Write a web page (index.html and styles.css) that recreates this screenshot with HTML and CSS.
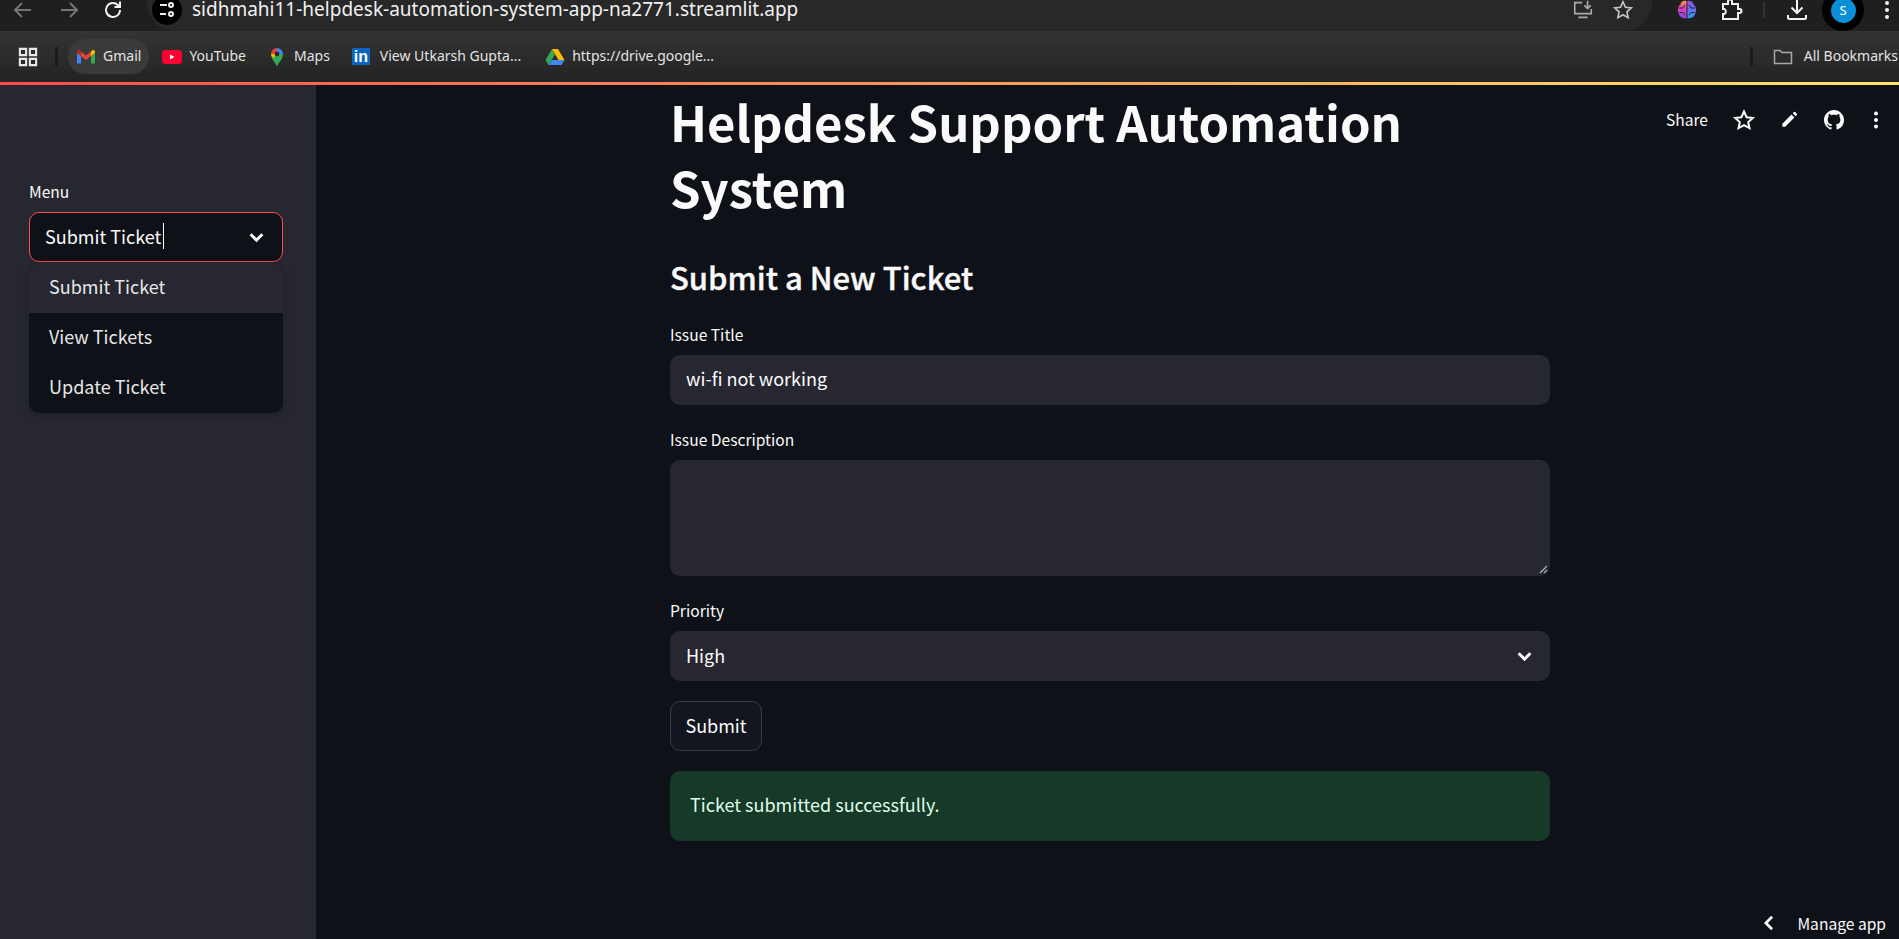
FILE: index.html
```html
<!DOCTYPE html>
<html lang="en">

<head>
    <meta charset="UTF-8">
    <title>Helpdesk Support Automation System</title>
    <link rel="stylesheet" href="styles.css">
</head>

<body>
    <div class="toolbar">
        <div class="nav-icons">
            <svg class="nav-icon dim" viewBox="0 0 24 24"><path d="M20 12H5M11 5l-7 7 7 7"/></svg>
            <svg class="nav-icon dim" viewBox="0 0 24 24"><path d="M4 12h15M13 5l7 7-7 7"/></svg>
            <svg class="nav-icon reload" viewBox="0 0 24 24"><path d="M19 12a7 7 0 1 1-2.200-5.100L19 9M19 3.500V9h-5.500"/></svg>
        </div>
        <div class="url-pill">
            <span class="site-badge">
                <svg viewBox="0 0 20 20"><path d="M3 5h7M3 14h6"/><circle cx="14" cy="5" r="2"/><circle cx="14" cy="14" r="2"/></svg>
            </span>
            <span class="url-text">sidhmahi11-helpdesk-automation-system-app-na2771.streamlit.app</span>
            <svg class="pill-icon install" viewBox="0 0 24 24"><path d="M11 4H3v12h18v-5M7 20h10M17 2v8M13.500 7l3.500 3.500L20.500 7"/></svg>
            <svg class="pill-icon star" viewBox="0 0 24 24"><path d="M12 3l2.700 6 6.300.7-4.700 4.300 1.300 6.400L12 17.200l-5.600 3.200L7.700 14 3 9.700 9.300 9z"/></svg>
        </div>
        <div class="toolbar-right">
            <svg class="brain" viewBox="0 0 20 20">
                <defs>
                    <linearGradient id="brainLeft" x1="0" y1="0" x2="0" y2="1">
                        <stop offset="0" stop-color="#f79a3e"/>
                        <stop offset="0.4" stop-color="#e83fb0"/>
                        <stop offset="1" stop-color="#8f45e8"/>
                    </linearGradient>
                    <linearGradient id="brainRight" x1="0" y1="0" x2="0" y2="1">
                        <stop offset="0" stop-color="#9a4be8"/>
                        <stop offset="1" stop-color="#2f9bf0"/>
                    </linearGradient>
                </defs>
                <path d="M9.500 1C6.500.2 3.500 2 3.500 4.500 1 6 .2 10 1.500 12.500c.3 3 3 6 8 6z" fill="url(#brainLeft)"/>
                <path d="M10.500 1c3-.8 6 1 6 3.500 2.500 1.500 3.300 5.500 2 8-.3 3-3 6-8 6z" fill="url(#brainRight)"/>
                <path d="M2 8h4l2-3M2.500 12.500H6l2 2.500M18 8h-4l-2-3M17.500 12.500H14L12 15" fill="none" stroke="#2a2140" stroke-width="1"/>
            </svg>
            <svg class="tool-icon puzzle" viewBox="0 0 24 24"><path d="M4 6h5V3.500a2 2 0 0 1 4 0V6h6v5h1.500a2 2 0 0 1 0 4H19v6H4v-5h1.500a3 3 0 0 0 0-5H4z"/></svg>
            <span class="tool-sep"></span>
            <svg class="tool-icon download" viewBox="0 0 24 24"><path d="M12 2v13M6.500 9.500L12 15l5.500-5.500M3 17v2.500a1.500 1.500 0 0 0 1.500 1.500h15a1.500 1.500 0 0 0 1.500-1.500V17"/></svg>
            <span class="avatar-ring"><span class="avatar">S</span></span>
            <svg class="tool-dots" viewBox="0 0 6 20"><circle cx="3" cy="3" r="2"/><circle cx="3" cy="10" r="2"/><circle cx="3" cy="17" r="2"/></svg>
        </div>
    </div>

    <div class="bookmarks">
        <svg class="apps" viewBox="0 0 16 16"><path d="M1.500 1.500h5v5h-5zM9.500 1.500h5v5h-5zM1.500 9.500h5v5h-5zM9.500 9.500h5v5h-5z"/></svg>
        <span class="bm-sep"></span>
        <div class="bm active">
            <svg class="bm-icon" viewBox="0 0 20 16">
                <path d="M1 14.500V4l4 3v7.500z" fill="#4285f4"/>
                <path d="M15 14.500V7l4-3v10.500z" fill="#34a853"/>
                <path d="M15 2.500V7l4-3V3c0-1.700-2-2.500-3-1.500z" fill="#fbbc04"/>
                <path d="M5 7V2.500L10 6.500l5-4V7l-5 4z" fill="#ea4335"/>
                <path d="M1 4V3c0-1.700 2-2.500 3-1.500L5 2.500V7z" fill="#c5221f"/>
            </svg>
            <span class="bm-label">Gmail</span>
        </div>
        <div class="bm">
            <svg class="bm-icon" viewBox="0 0 20 16"><rect x="0" y="1" width="20" height="14" rx="3.500" fill="#ff0033"/><path d="M8 5.500l4.500 2.500L8 10.500z" fill="#fff"/></svg>
            <span class="bm-label">YouTube</span>
        </div>
        <div class="bm">
            <svg class="bm-icon" viewBox="0 0 14 20">
                <path d="M7 19.500C5 15 1 12 1 7h12c0 5-4 8-6 12.500z" fill="#34a853"/>
                <path d="M1 7a6 6 0 0 1 6-6v6z" fill="#ea4335"/>
                <path d="M7 1a6 6 0 0 1 6 6H7z" fill="#4285f4"/>
                <path d="M1 7h6l-3.500 4C2 9.700 1 8.500 1 7z" fill="#fbbc04"/>
                <circle cx="7" cy="7" r="2.400" fill="#2b2b2b"/>
            </svg>
            <span class="bm-label">Maps</span>
        </div>
        <div class="bm linked">
            <span class="linkedin">in</span>
            <span class="bm-label">View Utkarsh Gupta...</span>
        </div>
        <div class="bm">
            <svg class="bm-icon" viewBox="0 0 20 18">
                <path d="M7 1l3 5.500L3.500 17l-3-5z" fill="#34a853"/>
                <path d="M7 1h6l6.500 11H13.500z" fill="#fbbc04"/>
                <path d="M7 12h12.500l-3 5h-13z" fill="#4285f4"/>
            </svg>
            <span class="bm-label">https://drive.google...</span>
        </div>
        <div class="bm-right">
            <span class="bm-sep"></span>
            <svg class="folder" viewBox="0 0 20 16"><path d="M1.500 14.500v-13h5.500l2 2h9.500v11z"/></svg>
            <span class="bm-label">All Bookmarks</span>
        </div>
    </div>

    <div class="deco-line"></div>

    <div class="app">
        <aside class="sidebar">
            <label class="field-label">Menu</label>
            <div class="side-select">
                <div class="select-box focused">
                    <span class="caret-text">Submit Ticket</span>
                    <svg class="chevron" viewBox="0 0 16 16"><path d="M3.500 5.500L8 10l4.500-4.500"/></svg>
                </div>
                <ul class="dropdown">
                    <li class="current">Submit Ticket</li>
                    <li>View Tickets</li>
                    <li>Update Ticket</li>
                </ul>
            </div>
        </aside>

        <main class="main">
            <h1>Helpdesk Support Automation System</h1>
            <h2>Submit a New Ticket</h2>

            <label class="field-label">Issue Title</label>
            <div class="input-box">wi-fi not working</div>

            <label class="field-label">Issue Description</label>
            <div class="textarea-box">
                <svg class="resize-grip" viewBox="0 0 10 10"><path d="M9 2L2 9M9 6L6 9"/></svg>
            </div>

            <label class="field-label">Priority</label>
            <div class="select-box plain">
                <span>High</span>
                <svg class="chevron" viewBox="0 0 16 16"><path d="M3.500 5.500L8 10l4.500-4.500"/></svg>
            </div>

            <button class="submit-btn">Submit</button>

            <div class="success">Ticket submitted successfully.</div>
        </main>

        <div class="app-header">
            <span class="share">Share</span>
            <svg class="head-icon star-icon" viewBox="0 0 24 24"><path d="M12 3.500l2.600 5.700 6.200.7-4.600 4.200 1.300 6.100L12 17.200l-5.500 3 1.300-6.100L3.200 9.900l6.200-.7z"/></svg>
            <svg class="head-icon pencil-icon" viewBox="0 0 24 24"><path d="M4 20v-3.500L15 5.500 18.500 9 7.500 20zM16.500 4l1.500-1.500a1 1 0 0 1 1.400 0l2 2a1 1 0 0 1 0 1.400L20 7.500z"/></svg>
            <svg class="head-icon github-icon" viewBox="0 0 16 16"><path d="M8 0C3.580 0 0 3.580 0 8c0 3.540 2.290 6.530 5.470 7.590.4.070.55-.17.55-.38 0-.19-.01-.82-.01-1.490-2.010.37-2.530-.49-2.690-.94-.09-.23-.48-.94-.82-1.130-.28-.15-.68-.52-.01-.53.63-.01 1.080.58 1.230.82.720 1.210 1.870.87 2.330.66.070-.52.280-.87.510-1.070-1.780-.2-3.640-.89-3.640-3.950 0-.87.310-1.590.820-2.150-.08-.2-.36-1.020.08-2.120 0 0 .67-.21 2.200.82.640-.18 1.320-.27 2-.27s1.360.09 2 .27c1.530-1.040 2.200-.82 2.200-.82.44 1.100.16 1.920.08 2.120.51.560.82 1.270.82 2.150 0 3.070-1.870 3.750-3.650 3.950.29.250.54.730.54 1.480 0 1.070-.01 1.930-.01 2.200 0 .21.150.46.550.38A8.010 8.010 0 0 0 16 8c0-4.420-3.580-8-8-8z"/></svg>
            <svg class="head-dots" viewBox="0 0 6 20"><circle cx="3" cy="3.500" r="2"/><circle cx="3" cy="10" r="2"/><circle cx="3" cy="16.500" r="2"/></svg>
        </div>

        <div class="manage-app">
            <svg class="manage-chevron" viewBox="0 0 16 16"><path d="M10.500 3L5.500 8l5 5"/></svg>
            <span>Manage app</span>
        </div>
    </div>
</body>
</html>
```

FILE: styles.css
```css
* {
    box-sizing: border-box;
}

html, body {
    height: 100%;
}

body {
    margin: 0;
    display: flex;
    flex-direction: column;
    overflow: hidden;
    background-color: #0e1117;
    color: #fafafa;
    font-family: "Noto Sans", sans-serif;
}

/* browser bars */
.toolbar {
    height: 31px;
    flex-shrink: 0;
    display: flex;
    background-color: #1f1f1f;
}

.nav-icons {
    width: 147px;
    padding: 0 0 11px 11px;
    display: flex;
    align-items: center;
    gap: 22px;
}

.nav-icon {
    width: 24px;
    height: 24px;
    fill: none;
    stroke: #f2f2f2;
    stroke-width: 2;
}

.nav-icon.dim {
    stroke: #757575;
}

.nav-icon.reload {
    margin-left: -2px;
}

.url-pill {
    width: 1505px;
    height: 31px;
    display: flex;
    align-items: center;
    padding: 0 0 11px 5px;
    background-color: #282828;
    border-radius: 0 0 28px 28px;
}

.site-badge {
    width: 30px;
    height: 30px;
    flex-shrink: 0;
    display: flex;
    align-items: center;
    justify-content: center;
    background-color: #000;
    border-radius: 50%;
}

.site-badge svg {
    width: 20px;
    height: 20px;
    fill: none;
    stroke: #eee;
    stroke-width: 2;
}

.url-text {
    margin: 0 0 2px 10px;
    font-size: 19px;
    line-height: 18px;
    color: #f1f1f1;
    white-space: nowrap;
    flex: 1;
}

.pill-icon {
    width: 22px;
    height: 22px;
    fill: none;
    stroke: #aaa;
    stroke-width: 1.800;
}

.pill-icon.star {
    margin: 0 18px 0 18px;
    stroke: #c4c4c4;
}

.toolbar-right {
    flex: 1;
    display: flex;
    align-items: center;
    padding: 0 0 11px 24px;
}

.brain {
    width: 20px;
    height: 20px;
    margin-left: 1px;
    flex-shrink: 0;
}

.tool-icon {
    width: 24px;
    height: 24px;
    flex-shrink: 0;
    fill: none;
    stroke: #f2f2f2;
    stroke-width: 2;
}

.puzzle {
    margin-left: 22px;
}

.tool-sep {
    width: 2px;
    height: 16px;
    margin-left: 20px;
    flex-shrink: 0;
    background-color: #333;
}

.download {
    margin-left: 20px;
}

.avatar-ring {
    width: 42px;
    height: 42px;
    margin-left: 13px;
    display: flex;
    align-items: center;
    justify-content: center;
    background-color: #000;
    border-radius: 50%;
    flex-shrink: 0;
}

.avatar {
    width: 25px;
    height: 25px;
    border-radius: 50%;
    background-color: #0b8fd6;
    color: #fff;
    font-size: 13px;
    text-align: center;
    line-height: 25px;
}

.tool-dots {
    width: 6px;
    height: 20px;
    margin-left: 20px;
    flex-shrink: 0;
    fill: #f2f2f2;
}

.bookmarks {
    height: 51px;
    flex-shrink: 0;
    display: flex;
    align-items: center;
    padding: 0 0 0 18px;
    font-size: 14px;
    color: #e3e3e3;
    background: linear-gradient(#343434, #232323);
}

.apps {
    width: 20px;
    height: 20px;
    fill: none;
    stroke: #e8e8e8;
    stroke-width: 1.700;
}

.bm-sep {
    width: 3px;
    height: 19px;
    margin-left: 17px;
    background-color: #1a1a1a;
}

.bm {
    height: 35px;
    display: flex;
    align-items: center;
    gap: 7px;
    padding: 0 8px;
    margin-right: 5px;
    white-space: nowrap;
    border-radius: 17px;
}

.bm-label {
    padding-bottom: 2px;
}

.bm.active {
    margin-left: 10px;
    background-color: #3a3a3a;
}

.bm.linked {
    margin-right: 8px;
}

.bm-icon {
    width: 20px;
    height: 20px;
}

.linkedin {
    width: 18px;
    height: 17px;
    margin: 0 3px 0 1px;
    background-color: #0a66c2;
    color: #fff;
    font: bold 16px/18px "Liberation Sans", sans-serif;
    text-align: center;
    border-radius: 1px;
}

.bm-right {
    margin-left: auto;
    display: flex;
    align-items: center;
    white-space: nowrap;
    margin-right: 1px;
}

.folder {
    width: 20px;
    height: 16px;
    margin: 0 11px 0 20px;
    fill: none;
    stroke: #a8a8a8;
    stroke-width: 1.500;
}

.deco-line {
    height: 3px;
    flex-shrink: 0;
    background: linear-gradient(90deg, #ff4b4b, #ffe76a);
}

/* streamlit app */
.app {
    flex: 1;
    display: flex;
    position: relative;
    font-family: "Noto Sans CJK JP", sans-serif;
}

.sidebar {
    width: 316px;
    padding: 96px 33px 0 29px;
    background-color: #262730;
}

.sidebar .field-label {
    margin-bottom: 10px;
    line-height: 21px;
}

.field-label {
    display: block;
    height: 21px;
    margin-bottom: 9px;
    font-size: 15.600px;
    line-height: 19px;
}

.side-select {
    position: relative;
}

.select-box {
    height: 50px;
    display: flex;
    align-items: center;
    justify-content: space-between;
    padding: 0 15px 0 16px;
    font-size: 18px;
    line-height: 26px;
    border-radius: 10px;
}

.select-box span {
    margin-top: -2px;
}

.select-box.focused {
    background-color: #0e1117;
    border: 1px solid #ff4b4b;
    padding-left: 15px;
}

.select-box.plain {
    background-color: #262730;
    margin-bottom: 20px;
}

.caret-text {
    padding-right: 2px;
    border-right: 1px solid #fafafa;
}

.chevron {
    width: 21px;
    height: 21px;
    fill: none;
    stroke: #fafafa;
    stroke-width: 2.200;
}

.dropdown {
    position: absolute;
    top: 51px;
    left: 0;
    right: 0;
    margin: 0;
    padding: 0;
    list-style: none;
    font-size: 18px;
    background-color: #0e1117;
    border-radius: 10px;
    overflow: hidden;
    box-shadow: 0 2px 8px rgba(0, 0, 0, 0.25);
}

.dropdown li {
    height: 50px;
    padding: 0 20px;
    line-height: 46px;
    color: #e6e6e6;
}

.dropdown li.current {
    background-color: #262730;
}

.main {
    width: 1234px;
    padding: 3px 0 0 354px;
}

h1 {
    margin: 0 0 36px;
    font-size: 49px;
    font-weight: 700;
    line-height: 66px;
}

h2 {
    margin: 0 0 27px;
    font-size: 31px;
    font-weight: 500;
    line-height: 42px;
    -webkit-text-stroke: 0.4px #fafafa;
}

.input-box {
    height: 50px;
    padding: 0 16px;
    margin-bottom: 25px;
    font-size: 18px;
    line-height: 46px;
    background-color: #262730;
    border-radius: 10px;
}

.textarea-box {
    height: 116px;
    margin-bottom: 25px;
    display: flex;
    align-items: flex-end;
    justify-content: flex-end;
    background-color: #262730;
    border-radius: 10px;
}

.resize-grip {
    width: 10px;
    height: 10px;
    margin: 0 2px 2px 0;
    fill: none;
    stroke: #b0b0b0;
    stroke-width: 1.300;
}

.submit-btn {
    display: block;
    width: 92px;
    height: 50px;
    margin-bottom: 20px;
    padding: 0 0 2px;
    font-family: inherit;
    font-size: 18px;
    color: #fafafa;
    background-color: #13161e;
    border: 1px solid #3b3d47;
    border-radius: 10px;
}

.success {
    height: 70px;
    padding: 0 20px;
    font-size: 18px;
    line-height: 66px;
    color: #dffde9;
    background-color: #173928;
    border-radius: 10px;
}

.app-header {
    position: absolute;
    top: 23px;
    right: 20px;
    display: flex;
    align-items: center;
    font-size: 15.600px;
}

.share {
    margin-top: -2px;
}

.head-icon {
    fill: #fafafa;
}

.star-icon {
    width: 24px;
    height: 24px;
    margin-left: 24px;
    fill: none;
    stroke: #fafafa;
    stroke-width: 2;
}

.pencil-icon {
    width: 20px;
    height: 20px;
    margin-left: 23px;
}

.github-icon {
    width: 20px;
    height: 20px;
    margin-left: 25px;
}

.head-dots {
    width: 6px;
    height: 20px;
    margin-left: 29px;
    fill: #fafafa;
}

.manage-app {
    position: absolute;
    right: 13px;
    bottom: 5px;
    display: flex;
    align-items: center;
    font-size: 15.600px;
}

.manage-chevron {
    width: 20px;
    height: 20px;
    margin-right: 18px;
    fill: none;
    stroke: #fafafa;
    stroke-width: 2.200;
}
```
